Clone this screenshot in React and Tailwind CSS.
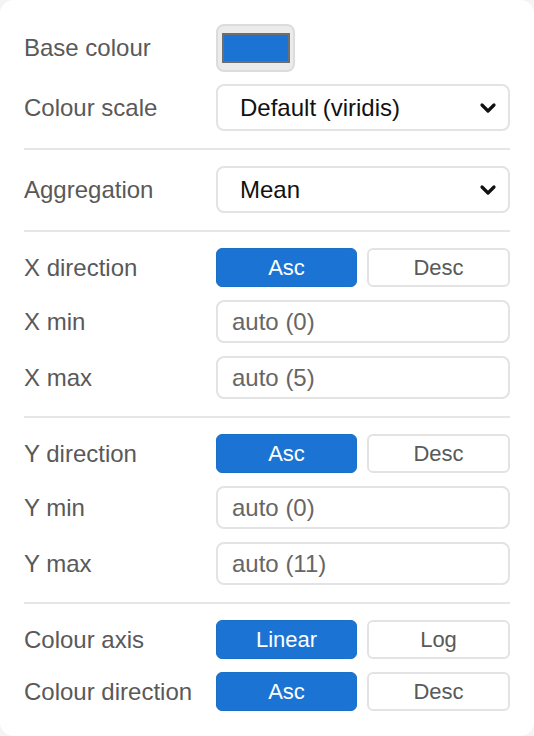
import React from "react";

const font = { fontFamily: '"Liberation Sans", Arial, sans-serif' };

const Label = ({ children }) => (
  <div className="w-[192px] shrink-0 text-[24px] leading-none text-[#595959]">{children}</div>
);

const Row = ({ label, children }) => (
  <div className="flex items-center">
    <Label>{label}</Label>
    <div className="flex-1">{children}</div>
  </div>
);

const Divider = () => <div className="mt-[17px] mb-[16px] h-[2px] bg-[#e6e6e6]" />;

const Chevron = () => (
  <svg width="20" height="20" viewBox="0 0 20 20" className="absolute right-[10px] top-1/2 -translate-y-1/2">
    <path d="M4 7 L10 13 L16 7" fill="none" stroke="#111" strokeWidth="3.2" strokeLinecap="round" strokeLinejoin="round" />
  </svg>
);

const Select = ({ value }) => (
  <div className="relative flex h-[47px] items-center rounded-[8px] border-2 border-[#e3e3e3] bg-white pl-[22px] text-[24px] text-[#111]">
    {value}
    <Chevron />
  </div>
);

const Input = ({ value }) => (
  <div className="flex h-[43px] items-center rounded-[8px] border-2 border-[#e3e3e3] bg-white pl-[14px] text-[24px] text-[#666]">
    {value}
  </div>
);

const Toggle = ({ a, b }) => (
  <div className="flex gap-[10px]">
    <div className="flex h-[39px] flex-1 items-center justify-center rounded-[6px] border border-[#1a6fc7] bg-[#1b74d3] text-[22px] text-white">
      {a}
    </div>
    <div className="flex h-[39px] flex-1 items-center justify-center rounded-[6px] border-2 border-[#e3e3e3] bg-white text-[22px] text-[#595959]">
      {b}
    </div>
  </div>
);

export default function App() {
  return (
    <div style={font} className="min-h-[736px] w-[534px] bg-[#f4f4f4]">
      <div className="flex min-h-[736px] flex-col rounded-[14px] bg-white px-[24px] pt-[24px] pb-[25px]">
        <Row label="Base colour">
          <div className="flex h-[48px] w-[79px] items-center justify-center rounded-[8px] border-2 border-[#dcdcdc] bg-[#ebebeb]">
            <div className="h-[30px] w-[68px] border-2 border-[#6e6e6e] bg-[#1b74d3]" />
          </div>
        </Row>
        <div className="mt-[12px]">
          <Row label="Colour scale"><Select value="Default (viridis)" /></Row>
        </div>
        <Divider />
        <Row label="Aggregation"><Select value="Mean" /></Row>
        <Divider />
        <div className="flex flex-col gap-[13px]">
          <Row label="X direction"><Toggle a="Asc" b="Desc" /></Row>
          <Row label="X min"><Input value="auto (0)" /></Row>
          <Row label="X max"><Input value="auto (5)" /></Row>
        </div>
        <Divider />
        <div className="flex flex-col gap-[13px]">
          <Row label="Y direction"><Toggle a="Asc" b="Desc" /></Row>
          <Row label="Y min"><Input value="auto (0)" /></Row>
          <Row label="Y max"><Input value="auto (11)" /></Row>
        </div>
        <Divider />
        <div className="flex flex-col gap-[13px]">
          <Row label="Colour axis"><Toggle a="Linear" b="Log" /></Row>
          <Row label="Colour direction"><Toggle a="Asc" b="Desc" /></Row>
        </div>
      </div>
    </div>
  );
}
